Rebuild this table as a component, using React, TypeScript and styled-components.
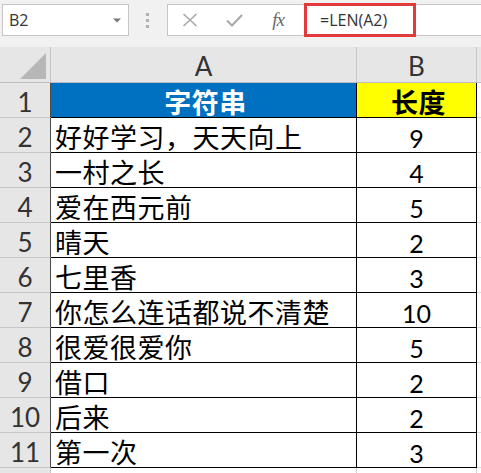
import React from 'react';
import styled, { createGlobalStyle } from 'styled-components';

const Global = createGlobalStyle`
  html, body { margin: 0; padding: 0; background: #ffffff; }
  body { font-family: "Noto Sans", "Noto Sans CJK SC", sans-serif; }
`;

const Page = styled.div`
  width: 481px;
  height: 473px;
  overflow: hidden;
  display: flex;
  flex-direction: column;
  background: #f1f1f1;
`;

const Toolbar = styled.div`
  height: 47px;
  flex: none;
  box-sizing: border-box;
  display: flex;
  align-items: flex-start;
  padding: 4px 0 0 2px;
`;

const NameBox = styled.div`
  width: 127px;
  height: 32px;
  box-sizing: border-box;
  background: #fff;
  border: 1px solid #c6c6c6;
  display: flex;
  align-items: center;
  justify-content: space-between;
  padding: 0 7px 0 6px;
  font: 16px "Open Sans", "Noto Sans", sans-serif;
  color: #333;
`;

const Grip = styled.div`
  width: 3px;
  height: 32px;
  margin-left: 17px;
  display: flex;
  flex-direction: column;
  justify-content: center;
  gap: 3px;
`;

const Dot = styled.span`
  width: 3px;
  height: 3px;
  background: #b0b0b0;
`;

const FxBox = styled.div`
  width: 137px;
  height: 32px;
  margin-left: 18px;
  box-sizing: border-box;
  background: #fff;
  border: 1px solid #c6c6c6;
  border-right: none;
  display: flex;
  align-items: center;
`;

const FxSlot = styled.div`
  width: 44px;
  height: 30px;
  display: flex;
  align-items: center;
  justify-content: center;
`;

const FxText = styled.span`
  font: italic 19px "Liberation Serif", "DejaVu Serif", serif;
  color: #6a6a6a;
  letter-spacing: -1px;
`;

const FormulaField = styled.div`
  position: relative;
  flex: 1;
  height: 32px;
  box-sizing: border-box;
  background: #fff;
  border-top: 1px solid #c6c6c6;
  border-bottom: 1px solid #c6c6c6;
  display: flex;
  align-items: center;
  padding-left: 16px;
  font: 16px "Open Sans", "Noto Sans", sans-serif;
  color: #333;
`;

const Highlight = styled.div`
  position: absolute;
  left: 0;
  top: -2px;
  width: 112px;
  height: 34px;
  box-sizing: border-box;
  border: 3px solid #e23a3a;
  pointer-events: none;
`;

const Grid = styled.div`
  flex: 1;
  display: grid;
  grid-template-columns: 51px 306px 120px 1fr;
  grid-template-rows: 36px repeat(11, 35px) 35px;
  background: #fff;
`;

const Corner = styled.div`
  background: #e6e6e6;
  border-right: 1px solid #c6c6c6;
  border-bottom: 1px solid #bdbdbd;
  display: flex;
  align-items: flex-end;
  justify-content: flex-end;
  padding: 0 4px 3px 0;
`;

const ColHead = styled.div<{ $last?: boolean }>`
  background: #e6e6e6;
  border-right: ${(p) => (p.$last ? 'none' : '1px solid #c6c6c6')};
  border-bottom: 1px solid #bdbdbd;
  display: flex;
  align-items: flex-end;
  justify-content: center;
  padding-bottom: 3px;
  font: 26px Lato, "Liberation Sans", sans-serif;
  line-height: 1;
  color: #333;
`;

const RowHead = styled.div<{ $edge?: string }>`
  background: #e6e6e6;
  border-right: 1px solid ${(p) => p.$edge || '#4a4a4a'};
  border-bottom: 1px solid #c6c6c6;
  display: flex;
  align-items: flex-end;
  justify-content: center;
  padding-bottom: 2px;
  font: 26px Lato, "Liberation Sans", sans-serif;
  line-height: 1;
  color: #333;
`;

const Cell = styled.div<{ $bg?: string; $color?: string; $bold?: boolean; $center?: boolean; $num?: boolean }>`
  background: ${(p) => p.$bg || '#fff'};
  border-right: 1px solid #000;
  border-bottom: 1px solid #000;
  display: flex;
  align-items: flex-end;
  justify-content: ${(p) => (p.$center ? 'center' : 'flex-start')};
  padding: ${(p) => (p.$num ? '0 0 1px 0' : '0 0 2px 4px')};
  font-family: ${(p) => (p.$num ? 'Lato, "Liberation Sans", sans-serif' : '"Noto Sans CJK SC", "Noto Sans", sans-serif')};
  font-size: ${(p) => (p.$num ? '25px' : '27px')};
  font-weight: ${(p) => (p.$bold ? 700 : 400)};
  letter-spacing: ${(p) => (p.$num ? '0' : '0.5px')};
  line-height: 1;
  color: ${(p) => p.$color || '#000'};
  white-space: nowrap;
`;

const Blank = styled.div<{ $line?: boolean }>`
  background: #fff;
  border-right: ${(p) => (p.$line ? '1px solid #d4d4d4' : 'none')};
  border-bottom: 1px solid #d9d9d9;
`;

const rows: [string, string][] = [
  ['好好学习，天天向上', '9'],
  ['一村之长', '4'],
  ['爱在西元前', '5'],
  ['晴天', '2'],
  ['七里香', '3'],
  ['你怎么连话都说不清楚', '10'],
  ['很爱很爱你', '5'],
  ['借口', '2'],
  ['后来', '2'],
  ['第一次', '3'],
];

export default function App() {
  return (
    <>
      <Global />
      <Page>
        <Toolbar>
          <NameBox>
            <span>B2</span>
            <svg width="8" height="5" viewBox="0 0 8 5">
              <path d="M0 0.5 L8 0.5 L4 4.5 Z" fill="#777" />
            </svg>
          </NameBox>
          <Grip>
            <Dot />
            <Dot />
            <Dot />
          </Grip>
          <FxBox>
            <FxSlot>
              <svg width="16" height="14" viewBox="0 0 16 14">
                <path d="M1.5 1 L14.5 13 M14.5 1 L1.5 13" stroke="#a8a8a8" strokeWidth="1.6" fill="none" />
              </svg>
            </FxSlot>
            <FxSlot>
              <svg width="17" height="13" viewBox="0 0 17 13">
                <path d="M1 6.5 L6 11.5 L16 1" stroke="#a8a8a8" strokeWidth="2" fill="none" />
              </svg>
            </FxSlot>
            <FxSlot>
              <FxText>fx</FxText>
            </FxSlot>
          </FxBox>
          <FormulaField>
            =LEN(A2)
            <Highlight />
          </FormulaField>
        </Toolbar>
        <Grid>
          <Corner>
            <svg width="26" height="26" viewBox="0 0 26 26">
              <path d="M26 0 L26 26 L0 26 Z" fill="#b7b7b7" />
            </svg>
          </Corner>
          <ColHead>A</ColHead>
          <ColHead>B</ColHead>
          <ColHead $last />

          <RowHead>1</RowHead>
          <Cell $bg="#0070c0" $color="#fff" $bold $center>字符串</Cell>
          <Cell $bg="#ffff00" $bold $center>长度</Cell>
          <Blank />

          {rows.map(([text, len], i) => (
            <React.Fragment key={i}>
              <RowHead>{i + 2}</RowHead>
              <Cell>{text}</Cell>
              <Cell $center $num>{len}</Cell>
              <Blank />
            </React.Fragment>
          ))}

          <RowHead $edge="#c6c6c6" />
          <Blank $line />
          <Blank $line />
          <Blank />
        </Grid>
      </Page>
    </>
  );
}
